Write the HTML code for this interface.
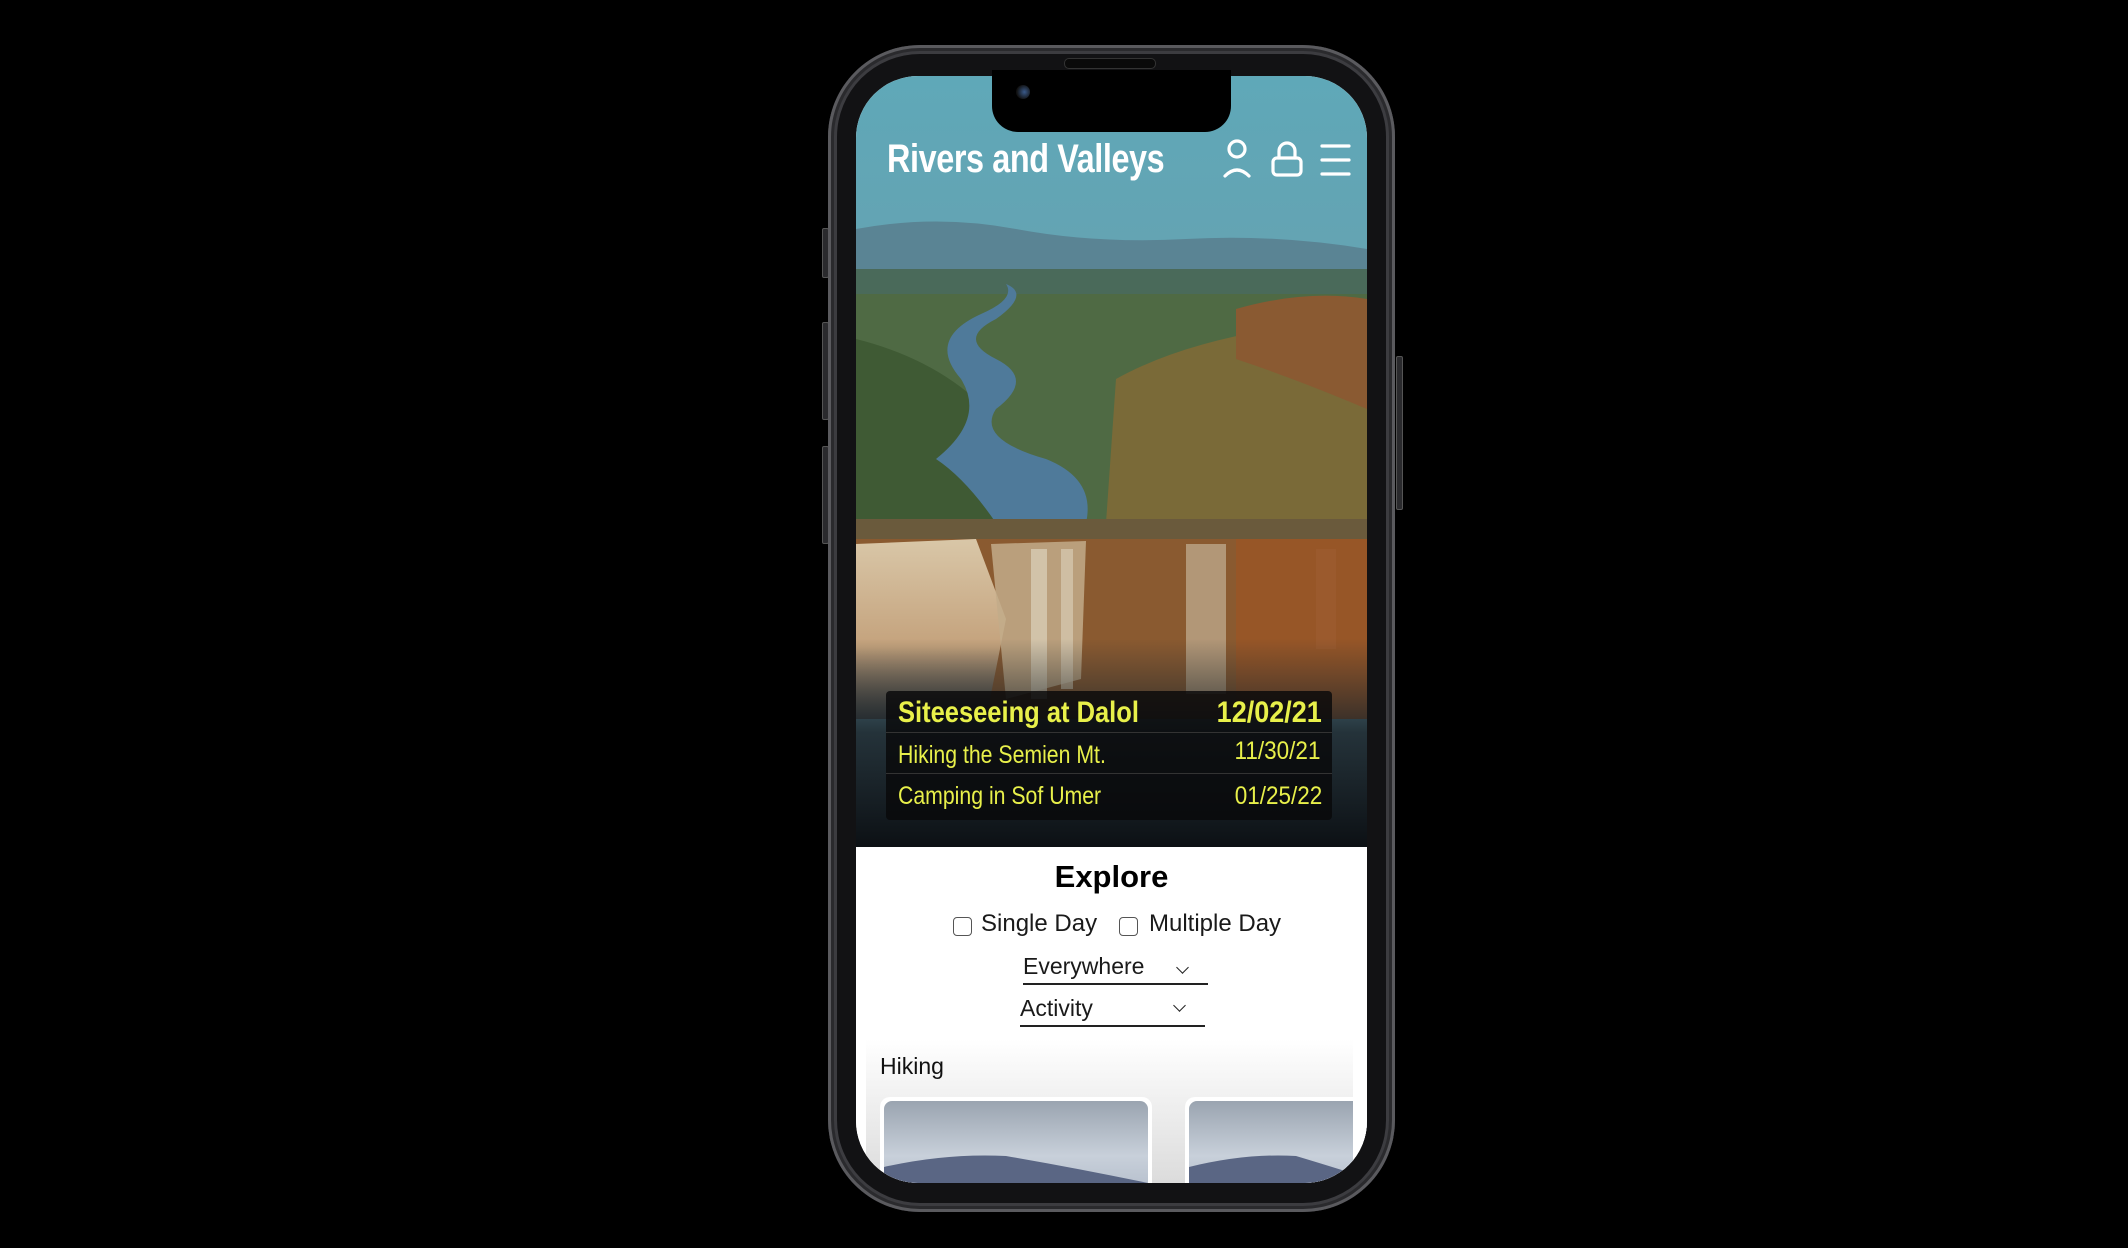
<!DOCTYPE html>
<html><head><meta charset="utf-8"><style>
html,body{margin:0;padding:0;background:#000;width:2128px;height:1248px;overflow:hidden;font-family:"Liberation Sans",sans-serif}
.phone{position:absolute;left:828px;top:45px;width:567px;height:1167px;border-radius:92px;background:#121214;box-shadow:inset 0 0 0 3px #5a5a5e,inset 0 0 0 6px #2a2a2d,inset 0 0 0 9px #3c3c40}
.btn{position:absolute;background:#2a2a2d;border:1px solid #555;border-radius:2px}
.screen{position:absolute;left:856px;top:76px;width:511px;height:1107px;border-radius:62px;overflow:hidden;background:#fff}
.notch{position:absolute;left:992px;top:70px;width:239px;height:62px;background:#000;border-radius:0 0 26px 26px}
.title{position:absolute;left:887px;top:137px;color:#fff;font-weight:bold;font-size:40px;letter-spacing:-0.5px;transform:scaleX(.81);transform-origin:left top;white-space:nowrap}
.events{position:absolute;left:886px;top:691px;width:446px;height:129px;background:rgba(8,8,10,.82);border-radius:4px}
.row{position:absolute;left:0;width:446px;color:#e8f04a;box-sizing:border-box}
.row span{position:absolute;white-space:nowrap;transform:scaleX(.85)}
.row span.l{transform-origin:left top}
.row span.r{transform-origin:right top;transform:scaleX(.9)}
.explore{position:absolute;left:856px;width:511px;text-align:center;top:859px;font-size:31px;font-weight:bold;color:#000}
.lbl{position:absolute;font-size:24px;color:#1a1a1a}
.cb{position:absolute;width:17px;height:17px;border:1.5px solid #555;border-radius:4px;background:#fff}
.sel{position:absolute;font-size:23px;color:#1a1a1a;border-bottom:2px solid #222;height:30px}
.chev{position:absolute;top:10px;width:8px;height:8px;border-right:1.5px solid #222;border-bottom:1.5px solid #222;transform:rotate(45deg)}
</style></head><body>
<div class="btn" style="left:822px;top:228px;width:5px;height:48px"></div>
<div class="btn" style="left:822px;top:322px;width:5px;height:96px"></div>
<div class="btn" style="left:822px;top:446px;width:5px;height:96px"></div>
<div class="btn" style="left:1396px;top:356px;width:5px;height:152px"></div>
<div class="phone"></div>
<div class="screen">
<svg width="511" height="1107" viewBox="0 -3 511 1107" style="position:absolute;left:0;top:0">
<defs>
<linearGradient id="sky" x1="0" y1="0" x2="0" y2="1"><stop offset="0" stop-color="#5fa8b8"/><stop offset="0.5" stop-color="#6a9eac"/><stop offset="1" stop-color="#5b8a98"/></linearGradient>
<linearGradient id="fall" x1="0" y1="0" x2="0" y2="1"><stop offset="0" stop-color="#d9c7a8"/><stop offset="0.6" stop-color="#c4a27c"/><stop offset="1" stop-color="#4a4a48"/></linearGradient>
<linearGradient id="dark" x1="0" y1="0" x2="0" y2="1"><stop offset="0" stop-color="#1f2a30" stop-opacity="0"/><stop offset="0.45" stop-color="#1a2228" stop-opacity="0.85"/><stop offset="1" stop-color="#0c1014"/></linearGradient>
<linearGradient id="shade" x1="0" y1="0" x2="0" y2="1"><stop offset="0" stop-color="#fff"/><stop offset="1" stop-color="#c4c4c4"/></linearGradient>
<linearGradient id="cloud" x1="0" y1="0" x2="0" y2="1"><stop offset="0" stop-color="#9aa4b0"/><stop offset="0.5" stop-color="#c8d0da"/><stop offset="1" stop-color="#aab4c4"/></linearGradient>
</defs>
<rect y="-3" width="511" height="771" fill="url(#sky)"/>
<path d="M0 150 Q80 135 160 150 T330 160 T511 170 L511 200 L0 200Z" fill="#5a8494"/>
<rect y="190" width="511" height="260" fill="#4f6a44"/>
<path d="M0 190 L511 190 L511 215 L0 215Z" fill="#4a6a5a"/>
<path d="M260 300 Q350 250 511 240 L511 444 L250 444Z" fill="#7a6a38"/>
<path d="M380 230 Q450 210 511 220 L511 330 Q440 300 380 280Z" fill="#8a5a32"/>
<path d="M0 260 Q80 280 130 330 L150 444 L0 444Z" fill="#3f5a34"/>
<path d="M150 205 Q175 215 140 240 Q100 260 140 280 Q180 300 140 330 Q120 360 190 380 Q240 400 230 444 L140 444 Q110 400 80 380 Q130 340 105 300 Q70 260 125 235 Q160 220 150 205Z" fill="#4f7a9a"/>
<rect y="440" width="511" height="30" fill="#6a5a3c"/>
<rect y="460" width="511" height="180" fill="#8a5a30"/>
<path d="M0 465 L120 460 L150 540 L130 640 L0 640Z" fill="url(#fall)"/>
<path d="M135 465 L230 462 L225 600 L150 620Z" fill="#c2ac8a" opacity=".85"/>
<rect x="175" y="470" width="16" height="150" fill="#d8ccb4" opacity=".8"/>
<rect x="205" y="470" width="12" height="140" fill="#d8ccb4" opacity=".7"/>
<rect x="330" y="465" width="40" height="150" fill="#bba68a" opacity=".8"/>
<rect x="460" y="470" width="20" height="100" fill="#b08060" opacity=".6"/>
<path d="M380 460 L511 460 L511 640 L380 640Z" fill="#9a5526" opacity=".8"/>
<rect y="560" width="511" height="208" fill="url(#dark)"/>
<rect y="768" width="511" height="336" fill="#fff"/>
<rect x="10" y="960" width="490" height="144" fill="url(#shade)" opacity=".6"/>
<rect x="24" y="1018" width="272" height="110" rx="10" fill="#fff"/>
<rect x="28" y="1022" width="264" height="110" rx="8" fill="url(#cloud)"/>
<path d="M28 1088 Q90 1074 150 1077 Q220 1089 292 1104 L292 1133 L28 1133Z" fill="#5a6684"/>
<rect x="329" y="1018" width="200" height="110" rx="10" fill="#fff"/>
<rect x="333" y="1022" width="200" height="110" rx="8" fill="url(#cloud)"/>
<path d="M333 1088 Q390 1074 440 1077 Q480 1089 511 1099 L511 1133 L333 1133Z" fill="#5a6684"/>
<rect x="497" y="960" width="14" height="144" fill="#fff"/>
</svg>
</div>
<div class="notch"></div>
<div style="position:absolute;left:1064px;top:58px;width:90px;height:9px;border-radius:5px;background:#0a0a0a;border:1px solid #333"></div>
<div style="position:absolute;left:1016px;top:85px;width:14px;height:14px;border-radius:50%;background:radial-gradient(circle at 60% 50%,#3a5a8a,#111 70%)"></div>
<div class="title">Rivers and Valleys</div>
<svg style="position:absolute;left:1220px;top:138px" width="135" height="42" viewBox="0 0 135 42">
<g fill="none" stroke="#fff" stroke-width="3.2" stroke-linecap="round">
<circle cx="17" cy="11" r="8"/><path d="M5 38 Q17 26 29 38"/>
<path d="M59 20 V13 a8 8 0 0 1 16 0 V20"/><rect x="53" y="20" width="28" height="17" rx="4"/>
<path d="M102 8 H129 M102 22 H129 M102 36 H129"/>
</g></svg>
<div class="events">
<div class="row" style="top:0;height:42px;border-bottom:1px solid #333"><span class="l" style="left:12px;top:5px;font-size:30px;font-weight:bold">Siteeseeing at Dalol</span><span class="r" style="right:10px;top:5px;font-size:30px;font-weight:bold">12/02/21</span></div>
<div class="row" style="top:42px;height:41px;border-bottom:1px solid #333"><span class="l" style="left:12px;top:8px;font-size:25px">Hiking the Semien Mt.</span><span class="r" style="right:12px;top:4px;font-size:25px">11/30/21</span></div>
<div class="row" style="top:83px;height:46px"><span class="l" style="left:12px;top:8px;font-size:25px">Camping in Sof Umer</span><span class="r" style="right:10px;top:8px;font-size:25px">01/25/22</span></div>
</div>
<div class="explore">Explore</div>
<div class="cb" style="left:953px;top:917px"></div>
<div class="lbl" style="left:981px;top:910px">Single Day</div>
<div class="cb" style="left:1119px;top:917px"></div>
<div class="lbl" style="left:1149px;top:910px">Multiple Day</div>
<div class="sel" style="left:1023px;top:953px;width:185px">Everywhere<span class="chev" style="left:155px"></span></div>
<div class="sel" style="left:1020px;top:995px;width:185px">Activity<span class="chev" style="left:155px;top:6px"></span></div>
<div class="lbl" style="left:880px;top:1053px;font-size:23px;color:#111">Hiking</div>
</body></html>
